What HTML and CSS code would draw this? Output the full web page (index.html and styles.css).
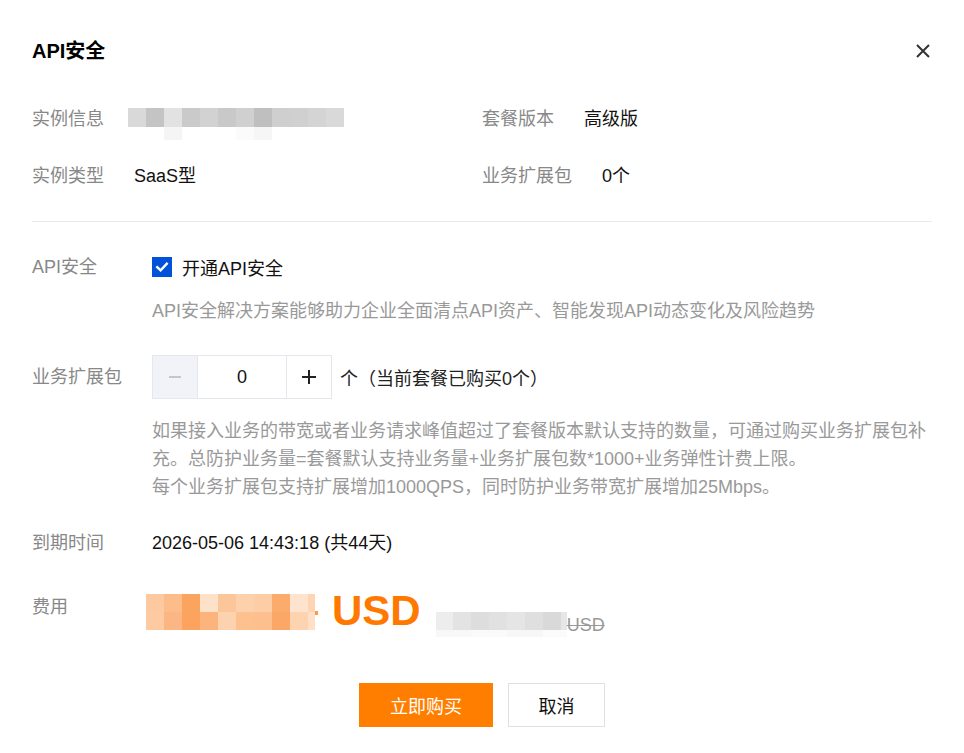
FILE: index.html
```html
<!DOCTYPE html>
<html lang="zh-CN">
<head>
<meta charset="utf-8">
<title>API安全</title>
<link rel="stylesheet" href="styles.css">
</head>
<body>
<div class="dialog">
  <div class="header">
    <h1 class="title">API安全</h1>
    <button class="close" aria-label="关闭">
      <svg width="16" height="16" viewBox="0 0 16 16"><path d="M2 2 L14 14 M14 2 L2 14" stroke="#333" stroke-width="2" fill="none"/></svg>
    </button>
  </div>

  <div class="info">
    <div class="info-item"><span class="info-label">实例信息</span><span class="blur-inst"></span></div>
    <div class="info-item"><span class="info-label">套餐版本</span><span class="info-value">高级版</span></div>
    <div class="info-item"><span class="info-label">实例类型</span><span class="info-value">SaaS型</span></div>
    <div class="info-item"><span class="info-label">业务扩展包</span><span class="info-value">0个</span></div>
  </div>

  <div class="divider"></div>

  <div class="form">
    <div class="form-row">
      <div class="form-label">API安全</div>
      <div class="form-body">
        <label class="check">
          <span class="check-box">
            <svg width="14" height="14" viewBox="0 0 14 14"><path d="M2.2 7.2 L5.6 10.4 L11.8 3.8" stroke="#fff" stroke-width="2.4" fill="none" stroke-linecap="square"/></svg>
          </span>
          <span>开通API安全</span>
        </label>
        <p class="hint hint-one">API安全解决方案能够助力企业全面清点API资产、智能发现API动态变化及风险趋势</p>
      </div>
    </div>

    <div class="form-row">
      <div class="form-label tall">业务扩展包</div>
      <div class="form-body">
        <div class="stepper-line">
          <div class="stepper">
            <span class="step-btn minus">
              <svg width="14" height="14" viewBox="0 0 14 14"><path d="M1 7 H13" stroke="#bbb" stroke-width="1.6"/></svg>
            </span>
            <span class="step-input">0</span>
            <span class="step-btn plus">
              <svg width="16" height="16" viewBox="0 0 16 16"><path d="M1 8 H15 M8 1 V15" stroke="#222" stroke-width="2"/></svg>
            </span>
          </div>
          <span class="unit">个（当前套餐已购买0个）</span>
        </div>
        <p class="hint hint-multi">如果接入业务的带宽或者业务请求峰值超过了套餐版本默认支持的数量，可通过购买业务扩展包补<br>充。总防护业务量=套餐默认支持业务量+业务扩展包数*1000+业务弹性计费上限。<br>每个业务扩展包支持扩展增加1000QPS，同时防护业务带宽扩展增加25Mbps。</p>
      </div>
    </div>

    <div class="form-row">
      <div class="form-label">到期时间</div>
      <div class="form-body"><span class="value">2026-05-06 14:43:18 (共44天)</span></div>
    </div>

    <div class="form-row fee-row">
      <div class="form-label">费用</div>
      <div class="form-body fee">
        <span class="blur-price"></span>
        <span class="price-dot"></span>
        <span class="price-cur">USD</span>
        <span class="blur-orig"></span>
        <span class="orig-cur">USD</span>
      </div>
    </div>
  </div>

  <div class="footer">
    <button class="btn btn-primary">立即购买</button>
    <button class="btn btn-default">取消</button>
  </div>
</div>
</body>
</html>
```

FILE: styles.css
```css
* { box-sizing: border-box; }
html, body { margin: 0; padding: 0; background: #fff; }
body {
  font-family: "Liberation Sans", "Noto Sans CJK SC", sans-serif;
  font-size: 18px;
  color: #000;
}
.dialog {
  width: 964px;
  height: 753px;
  padding: 37px 32px 0 32px;
}
.header {
  display: flex;
  justify-content: space-between;
  align-items: center;
  height: 28px;
}
.title {
  margin: 0;
  font-size: 20px;
  font-weight: bold;
  line-height: 28px;
  color: #000;
}
.close {
  border: 0;
  background: none;
  padding: 0;
  margin-right: -5px;
  width: 28px;
  height: 28px;
  display: flex;
  align-items: center;
  justify-content: center;
}
.info {
  margin-top: 42px;
  display: grid;
  grid-template-columns: 450px 450px;
  row-gap: 33px;
}
.info-item {
  display: flex;
  align-items: flex-start;
  height: 24px;
  line-height: 24px;
}
.info-label { color: #888; }
.info-value { margin-left: 30px; color: #111; }
.blur-inst {
  display: block;
  margin-left: 24px;
  margin-top: 1px;
  width: 216px;
  height: 32px;
  background:
    linear-gradient(to right,
      #d9d9d9 0 18px, #c4c4c4 18px 36px, #e2e2e2 36px 54px, #cacaca 54px 72px,
      #d2d2d2 72px 90px, #c9c9c9 90px 108px, #d0d0d0 108px 126px, #bfbfbf 126px 144px,
      #cfcfcf 144px 162px, #d0d0d0 162px 180px, #d4d4d4 180px 198px, #d9d9d9 198px 216px)
      left top / 216px 19px no-repeat,
    linear-gradient(to right,
      #fff 0 36px, #f5f5f5 36px 54px, #fff 54px 108px, #fbfbfb 108px 126px, #f6f6f6 126px 144px, #fff 144px 216px)
      left bottom / 216px 13px no-repeat;
}
.divider {
  margin-top: 33px;
  height: 1px;
  background: #e9eaef;
}
.form {
  margin-top: 33px;
  display: flex;
  flex-direction: column;
  gap: 30px;
}
.form-row {
  display: flex;
}
.form-label {
  width: 120px;
  flex: none;
  color: #888;
  line-height: 24px;
}
.form-label.tall { line-height: 44px; }
.form-body { flex: 1; }
.check {
  display: flex;
  align-items: center;
  gap: 10px;
  height: 24px;
  color: #111;
}
.check-box {
  width: 20px;
  height: 20px;
  background: #0052d9;
  display: flex;
  align-items: center;
  justify-content: center;
}
.hint {
  margin: 0;
  color: #999;
  line-height: 28px;
  white-space: nowrap;
}
.hint-one { margin-top: 18px; }
.hint-multi { margin-top: 18px; }
.stepper-line {
  display: flex;
  align-items: center;
  gap: 8px;
}
.stepper {
  display: flex;
  height: 44px;
  border: 1px solid #e6e7ec;
}
.step-btn {
  width: 45px;
  display: flex;
  align-items: center;
  justify-content: center;
}
.step-btn.minus { background: #f2f3f8; border-right: 1px solid #e6e7ec; }
.step-btn.plus { border-left: 1px solid #e6e7ec; }
.step-input {
  width: 88px;
  display: flex;
  align-items: center;
  justify-content: center;
  color: #111;
}
.unit { color: #222; }
.value { line-height: 24px; color: #111; }
.fee-row { margin-top: 10px; }
.fee {
  display: flex;
  align-items: flex-start;
  height: 44px;
}
.blur-price {
  display: block;
  margin-left: -6px;
  margin-top: -1px;
  width: 169px;
  height: 36px;
  background:
    linear-gradient(to right,
      #fdc9a0 0 18px, #fcbd8b 18px 36px, #fba45f 36px 54px, #fee1c9 54px 72px,
      #fdc59a 72px 90px, #fdd1ac 90px 108px, #fdcea6 108px 126px, #fbab6b 126px 144px,
      #fee4cf 144px 162px, #fed4b2 162px 169px)
      left top / 169px 18px no-repeat,
    linear-gradient(to right,
      #fdcaa1 0 18px, #fcb684 18px 36px, #fba35f 36px 54px, #fcb37c 54px 72px,
      #fdd3af 72px 90px, #fdc190 90px 108px, #fdbf8e 108px 126px, #fba768 126px 144px,
      #fdd3b0 144px 162px, #fee0c6 162px 169px)
      left bottom / 169px 18px no-repeat;
}
.price-dot {
  display: block;
  width: 3px;
  height: 4px;
  margin-top: 16px;
  background: #fb9a4a;
}
.price-cur {
  margin-left: 14px;
  font-size: 42px;
  font-weight: bold;
  line-height: 42px;
  margin-top: -5px;
  color: #ff7800;
}
.blur-orig {
  display: block;
  margin-left: 15px;
  margin-top: 17px;
  width: 131px;
  height: 25px;
  background:
    linear-gradient(to right,
      #ededed 0 17px, #e3e3e3 17px 35px, #dddddd 35px 53px, #e1e1e1 53px 71px,
      #e5e5e5 71px 89px, #dfdfdf 89px 107px, #d9d9d9 107px 125px, #e6e6e6 125px 131px)
      left top / 131px 18px no-repeat,
    linear-gradient(to right,
      #f8f8f8 0 35px, #fafafa 35px 71px, #f7f7f7 71px 107px, #fbfbfb 107px 131px)
      left bottom / 131px 7px no-repeat;
}
.orig-cur {
  margin-top: 18px;
  line-height: 24px;
  color: #999;
  text-decoration: line-through;
}
.footer {
  margin-top: 44px;
  display: flex;
  justify-content: center;
  gap: 15px;
}
.btn {
  height: 44px;
  font-family: inherit;
  font-size: 18px;
  padding: 0;
  cursor: pointer;
}
.btn-primary {
  width: 134px;
  background: #ff7e00;
  color: #fff;
  border: 0;
}
.btn-default {
  width: 97px;
  background: #fff;
  color: #111;
  border: 1px solid #dfe1e8;
}
```
